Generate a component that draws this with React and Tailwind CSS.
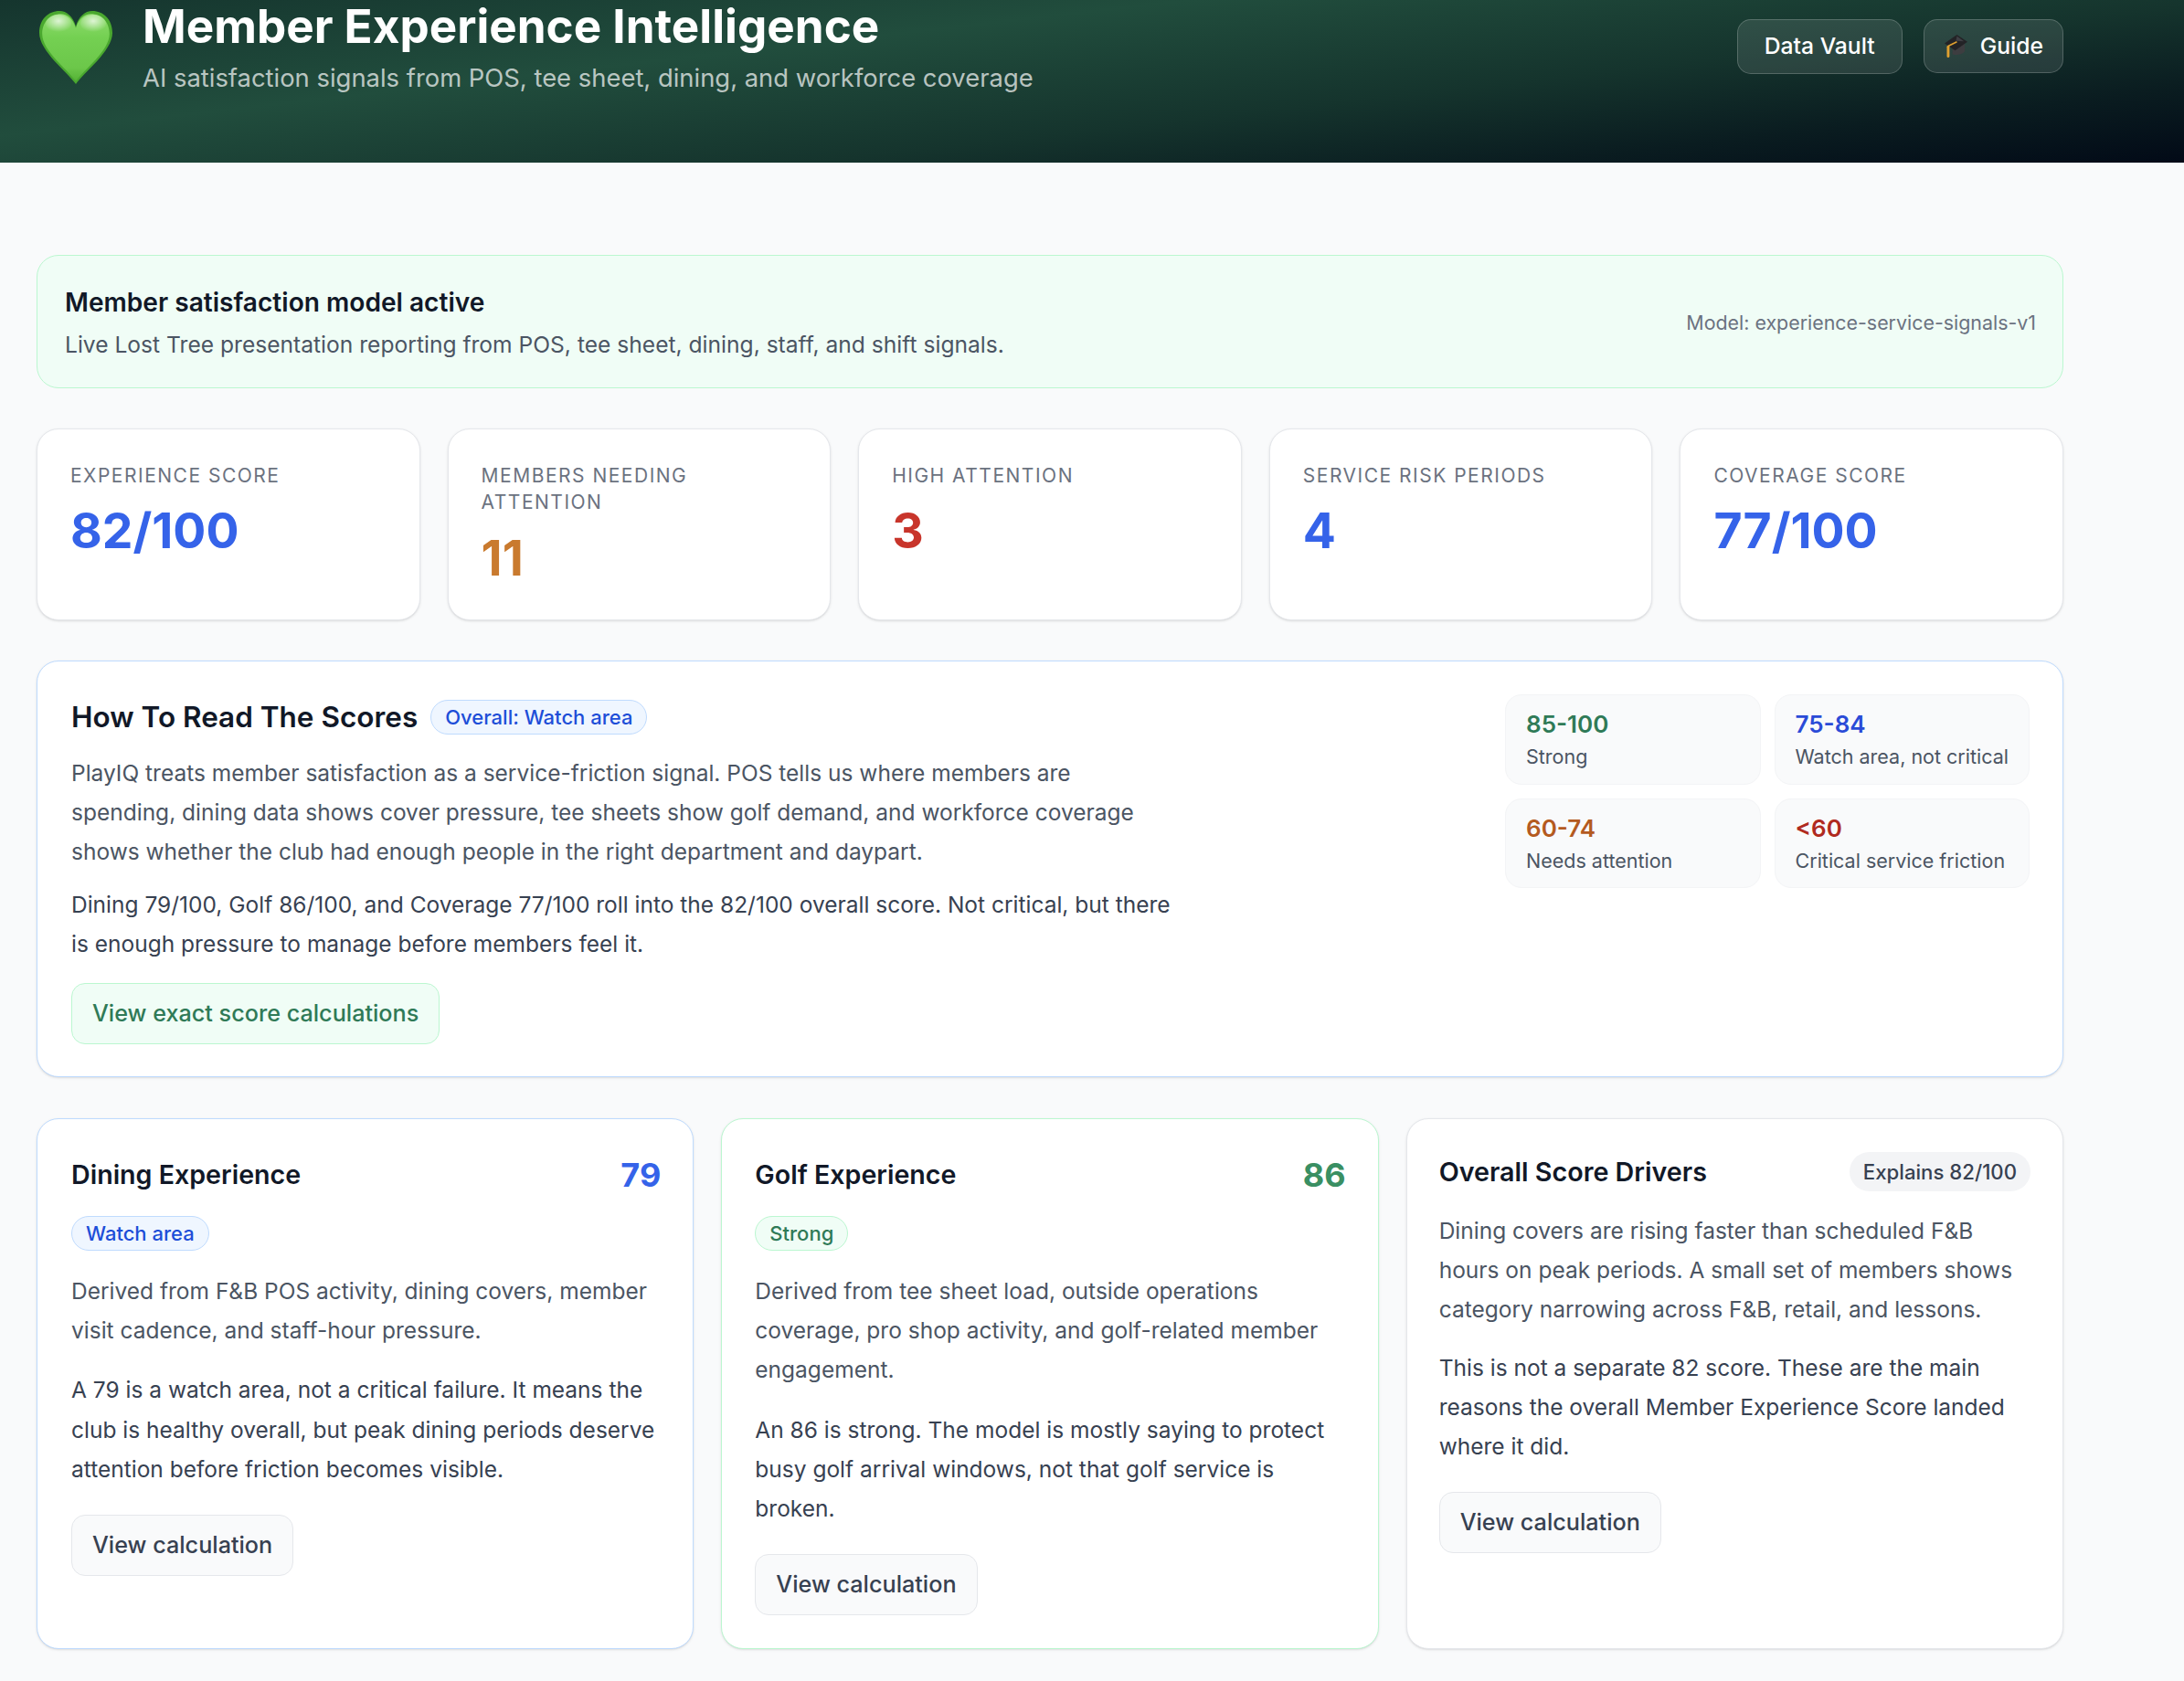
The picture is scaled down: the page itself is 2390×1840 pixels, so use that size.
import React from 'react'

const stats = [
  { label: 'Experience Score', value: '82/100', color: 'text-[#3563e9]' },
  { label: 'Members Needing Attention', value: '11', color: 'text-[#c97a2e]' },
  { label: 'High Attention', value: '3', color: 'text-[#c8352b]' },
  { label: 'Service Risk Periods', value: '4', color: 'text-[#3563e9]' },
  { label: 'Coverage Score', value: '77/100', color: 'text-[#3563e9]' },
]

const bands = [
  { range: '85-100', note: 'Strong', color: 'text-[#2f7a57]' },
  { range: '75-84', note: 'Watch area, not critical', color: 'text-[#2a4bd7]' },
  { range: '60-74', note: 'Needs attention', color: 'text-[#b45a1f]' },
  { range: '<60', note: 'Critical service friction', color: 'text-[#b02a20]' },
]

const heartPath = 'M40 80C31 67 0 44 0 24C0 9 10 0 22 0C30 0 37 6 40 17C43 6 50 0 58 0C70 0 80 9 80 24C80 44 49 67 40 80Z'

function Heart() {
  return (
    <svg viewBox="0 0 80 80" className="w-[80px] h-[80px] shrink-0 mt-3">
      <defs>
        <linearGradient id="heartFill" x1="0" y1="0" x2="0" y2="1">
          <stop offset="0" stopColor="#8fdc6e" />
          <stop offset="0.35" stopColor="#74d052" />
          <stop offset="0.8" stopColor="#6cc74a" />
          <stop offset="1" stopColor="#55b236" />
        </linearGradient>
        <radialGradient id="heartGlow" cx="0.5" cy="0.35" r="0.6">
          <stop offset="0" stopColor="#ffffff" stopOpacity="0.72" />
          <stop offset="1" stopColor="#ffffff" stopOpacity="0" />
        </radialGradient>
      </defs>
      <path d={heartPath} fill="#4aa82f" />
      <path d={heartPath} fill="url(#heartFill)" transform="translate(3.2 3.2) scale(0.92)" />
      <ellipse cx="21" cy="14" rx="14" ry="10" fill="url(#heartGlow)" />
      <ellipse cx="59" cy="14" rx="14" ry="10" fill="url(#heartGlow)" />
    </svg>
  )
}

function GradCap() {
  return (
    <svg viewBox="0 0 26 26" className="w-[25px] h-[25px] shrink-0">
      <path d="M9 15L23 10V19C19 23 13 24 9 22Z" fill="#3d3d40" />
      <path d="M14 0L26 8L12 18L0 10Z" fill="#232326" />
      <path d="M14 1.5L22 7.5L13 7Z" fill="#3f3f44" />
      <path d="M14 8L4 13" fill="none" stroke="#e0a030" strokeWidth="1.8" />
      <rect x="2.6" y="12.5" width="3" height="13.5" rx="1.2" fill="#e0a030" />
    </svg>
  )
}

function ViewButton({ mt = 'mt-[28px]' }) {
  return (
    <button className={`${mt} block h-[67px] px-[22px] rounded-[15px] border border-[#e5e7eb] bg-[#f9fafb] text-[25.2px] font-medium text-[#374151]`}>
      View calculation
    </button>
  )
}

export default function App() {
  return (
    <div className="min-h-[1840px] bg-[#f9fafb] font-['Inter',sans-serif] text-[#111827] overflow-hidden">
      <header className="h-[178px] bg-[linear-gradient(173.5deg,#15352e_0%,#214d3d_33%,#15342d_62%,#0a1c20_82%,#020a17_100%)] pl-[43px] pr-[132px] flex items-start">
        <Heart />
        <div className="ml-[33px] flex-1">
          <h1 className="mt-[1px] text-[51.2px] leading-[54px] font-bold text-white">Member Experience Intelligence</h1>
          <p className="mt-[12px] text-[27.4px] leading-[36px] text-white/70">AI satisfaction signals from POS, tee sheet, dining, and workforce coverage</p>
        </div>
        <div className="mt-[21px] flex items-start gap-[23px]">
          <button className="h-[60px] px-[29px] rounded-[15px] border border-white/20 bg-white/10 text-[24.7px] font-medium text-white">Data Vault</button>
          <button className="h-[59px] pl-[22px] pr-[21px] rounded-[15px] border border-white/20 bg-white/10 text-[24.7px] font-medium text-white flex items-center gap-[14px]">
            <GradCap />
            Guide
          </button>
        </div>
      </header>

      <main className="pl-[40px] pr-[132px] pt-[101px]">
        <section className="h-[146px] rounded-[24px] border border-[#bbf7d0] bg-[#f0fdf6] pl-[30px] pr-[29px] flex items-center justify-between">
          <div className="pt-[4px]">
            <div className="text-[28.1px] leading-[36px] font-semibold">Member satisfaction model active</div>
            <p className="mt-[10px] text-[24.6px] leading-[36px] text-[#4b5563]">Live Lost Tree presentation reporting from POS, tee sheet, dining, staff, and shift signals.</p>
          </div>
          <div className="pt-[2px] text-[21.4px] text-[#6b7280]">Model: experience-service-signals-v1</div>
        </section>

        <section className="mt-[44px] grid grid-cols-5 gap-[30px]">
          {stats.map((s) => (
            <div key={s.label} className="h-[210px] rounded-[24px] border border-[#e5e7eb] bg-white shadow-sm px-[36px] pt-[36px]">
              <div className="text-[21px] leading-[29.4px] uppercase tracking-[1.5px] text-[#6b7280]">{s.label}</div>
              <div className={`mt-[16px] text-[53.5px] leading-[60px] font-bold ${s.color}`}>{s.value}</div>
            </div>
          ))}
        </section>

        <section className="mt-[44px] h-[456px] rounded-[24px] border border-[#bfdbfe] bg-white shadow-sm pl-[37px] pr-[36px] pt-[40px] flex justify-between">
          <div>
            <div className="flex items-center gap-[14px]">
              <h2 className="text-[31.5px] leading-[42px] font-semibold">How To Read The Scores</h2>
              <span className="h-[38px] px-[15px] rounded-full border border-[#bfdbfe] bg-[#eff6ff] text-[22px] leading-[36px] font-medium text-[#1d4ed8]">Overall: Watch area</span>
            </div>
            <p className="mt-[19px] max-w-[1175px] text-[24.5px] leading-[43.2px] text-[#4b5563]">PlayIQ treats member satisfaction as a service-friction signal. POS tells us where members are spending, dining data shows cover pressure, tee sheets show golf demand, and workforce coverage shows whether the club had enough people in the right department and daypart.</p>
            <p className="mt-[14px] max-w-[1215px] text-[24.5px] leading-[43.2px] text-[#374151]">Dining 79/100, Golf 86/100, and Coverage 77/100 roll into the 82/100 overall score. Not critical, but there is enough pressure to manage before members feel it.</p>
            <button className="mt-[21px] h-[67px] px-[22px] rounded-[15px] border border-[#bbf7d0] bg-[#f0fdf6] text-[25.2px] font-medium text-[#2f7a57]">View exact score calculations</button>
          </div>
          <div className="-mt-[4px] w-[574px] shrink-0 grid grid-cols-2 gap-[15px] content-start">
            {bands.map((b) => (
              <div key={b.range} className="h-[98.5px] rounded-[18px] border border-[#f3f4f6] bg-[#f9fafb] pl-[22px] pt-[16px]">
                <div className={`text-[26px] leading-[32px] font-semibold ${b.color}`}>{b.range}</div>
                <div className="mt-[3px] text-[21.5px] leading-[32px] text-[#4b5563]">{b.note}</div>
              </div>
            ))}
          </div>
        </section>

        <section className="mt-[45px] grid grid-cols-3 gap-[30px]">
          <div className="h-[581px] rounded-[24px] border border-[#bfdbfe] bg-white shadow-sm pl-[37px] pr-[35px] pt-[38px]">
            <div className="flex items-center justify-between">
              <h3 className="text-[28.6px] leading-[46px] font-semibold">Dining Experience</h3>
              <span className="text-[36px] leading-[46px] font-bold text-[#3563e9]">79</span>
            </div>
            <span className="mt-[22px] inline-block h-[38px] px-[15px] rounded-full border border-[#bfdbfe] bg-[#eff6ff] text-[22px] leading-[36px] font-medium text-[#1d4ed8]">Watch area</span>
            <p className="mt-[23px] text-[24.5px] leading-[43.2px] text-[#4b5563]">Derived from F&amp;B POS activity, dining covers, member visit cadence, and staff-hour pressure.</p>
            <p className="mt-[22px] text-[24.5px] leading-[43.2px] text-[#374151]">A 79 is a watch area, not a critical failure. It means the club is healthy overall, but peak dining periods deserve attention before friction becomes visible.</p>
            <ViewButton />
          </div>

          <div className="h-[581px] rounded-[24px] border border-[#bbf7d0] bg-white shadow-sm pl-[36px] pr-[35px] pt-[38px]">
            <div className="flex items-center justify-between">
              <h3 className="text-[28.6px] leading-[46px] font-semibold">Golf Experience</h3>
              <span className="text-[36px] leading-[46px] font-bold text-[#3a8f63]">86</span>
            </div>
            <span className="mt-[22px] inline-block h-[38px] px-[15px] rounded-full border border-[#bbf7d0] bg-[#f0fdf6] text-[22px] leading-[36px] font-medium text-[#2f7a57]">Strong</span>
            <p className="mt-[23px] text-[24.5px] leading-[43.2px] text-[#4b5563]">Derived from tee sheet load, outside operations coverage, pro shop activity, and golf-related member engagement.</p>
            <p className="mt-[22px] text-[24.5px] leading-[43.2px] text-[#374151]">An 86 is strong. The model is mostly saying to protect busy golf arrival windows, not that golf service is broken.</p>
            <ViewButton />
          </div>

          <div className="h-[581px] rounded-[24px] border border-[#e5e7eb] bg-white shadow-sm pl-[35px] pr-[35px] pt-[36px]">
            <div className="flex items-center justify-between">
              <h3 className="text-[28.7px] leading-[43px] font-semibold">Overall Score Drivers</h3>
              <span className="h-[43px] px-[15px] rounded-full bg-[#f3f4f6] text-[22.2px] leading-[43px] font-medium text-[#374151]">Explains 82/100</span>
            </div>
            <p className="mt-[22px] text-[24.5px] leading-[43.2px] text-[#4b5563]">Dining covers are rising faster than scheduled F&amp;B hours on peak periods. A small set of members shows category narrowing across F&amp;B, retail, and lessons.</p>
            <p className="mt-[20px] text-[24.5px] leading-[43.2px] text-[#374151]">This is not a separate 82 score. These are the main reasons the overall Member Experience Score landed where it did.</p>
            <ViewButton />
          </div>
        </section>
      </main>
    </div>
  )
}
